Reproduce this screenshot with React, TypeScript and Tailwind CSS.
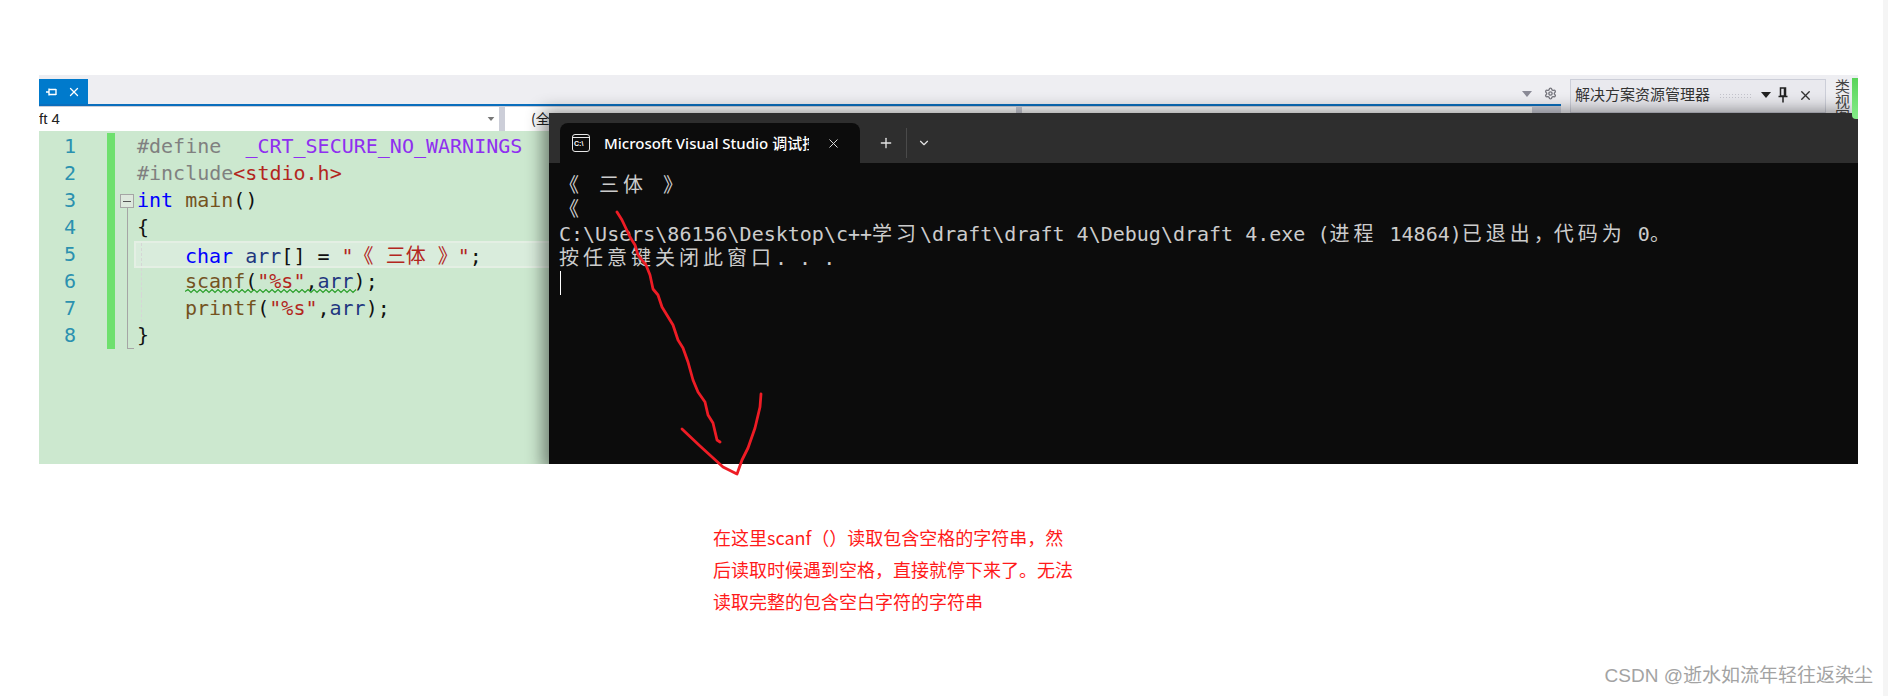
import React from "react";
import { X, Plus, ChevronDown, Settings } from "lucide-react";

const mono = "font-['DejaVu_Sans_Mono','Noto_Sans_CJK_SC',monospace]";
const C = {
  gray: "text-[#808080]",
  purple: "text-[#8f2ff0]",
  red: "text-[#b3261e]",
  blue: "text-[#0000ff]",
  brown: "text-[#74531f]",
  navy: "text-[#1f377f]",
  black: "text-[#111111]",
};

type Tok = [string, string];
type Line = { toks: Tok[]; indent?: boolean; fold?: "box" | "line" | "end" | "none"; hl?: boolean; squiggle?: boolean };

const lines: Line[] = [
  { fold: "none", toks: [["#define  ", C.gray], ["_CRT_SECURE_NO_WARNINGS", C.purple]] },
  { fold: "none", toks: [["#include", C.gray], ["<stdio.h>", C.red]] },
  { fold: "box", toks: [["int", C.blue], [" ", C.black], ["main", C.brown], ["()", C.black]] },
  { fold: "line", toks: [["{", C.black]] },
  {
    fold: "line",
    indent: true,
    hl: true,
    toks: [["char", C.blue], [" ", C.black], ["arr", C.navy], ["[] = ", C.black], ['"', C.red]],
  },
  {
    fold: "line",
    indent: true,
    squiggle: true,
    toks: [["scanf", C.brown], ["(", C.black], ['"%s"', C.red], [",", C.black], ["arr", C.navy], [");", C.black]],
  },
  {
    fold: "line",
    indent: true,
    toks: [["printf", C.brown], ["(", C.black], ['"%s"', C.red], [",", C.black], ["arr", C.navy], [");", C.black]],
  },
  { fold: "end", toks: [["}", C.black]] },
];

function Fold({ kind }: { kind: Line["fold"] }) {
  return (
    <div className="relative h-full w-[19px] shrink-0">
      {kind === "box" && (
        <>
          <div className="absolute left-[5px] top-[7px] flex h-[14px] w-[14px] items-center justify-center border border-[#a5a5a5] bg-[#dde8dd]">
            <div className="h-px w-[8px] bg-[#555555]" />
          </div>
          <div className="absolute left-[12px] top-[21px] h-[6px] w-px bg-[#a5a5a5]" />
        </>
      )}
      {kind === "line" && <div className="ml-[12px] h-full w-px bg-[#a5a5a5]" />}
      {kind === "end" && <div className="ml-[12px] h-[27px] w-[7px] border-b border-l border-[#a5a5a5]" />}
    </div>
  );
}

function CodeRow({ n, line }: { n: number; line: Line }) {
  return (
    <div className="flex h-[27px] items-stretch">
      <div className="w-[37px] shrink-0 text-right leading-[27px] text-[#2b91af]">{n}</div>
      <div className="w-[31px] shrink-0" />
      <div className="w-[8px] shrink-0 bg-[#6ee06e]" />
      <Fold kind={line.fold} />
      <div
        className={`flex min-w-0 flex-1 items-stretch pl-[3px] leading-[27px] whitespace-pre ${
          line.hl ? "border-y-2 border-l-2 border-[#e4efe4] bg-[#d9ecdc] pl-px leading-[23px]" : ""
        }`}
      >
        {line.indent && <div className="ml-[4px] w-[44px] shrink-0 border-l border-dashed border-[#d6d6d6]" />}
        <div className="relative">
          {line.toks.map(([t, c], i) => (
            <span key={i} className={c}>
              {t}
            </span>
          ))}
          {line.hl && (
            <>
              <span className={C.red}>《 三体 》</span>
              <span className={C.red}>"</span>
              <span className={C.black}>;</span>
            </>
          )}
          {line.squiggle && (
            <svg className="absolute left-0 top-[21px]" width="180" height="5" viewBox="0 0 180 5" fill="none">
              <path
                d="M0 2.5 l3 -2 l3 3 l3 -3 l3 3 l3 -3 l3 3 l3 -3 l3 3 l3 -3 l3 3 l3 -3 l3 3 l3 -3 l3 3 l3 -3 l3 3 l3 -3 l3 3 l3 -3 l3 3 l3 -3 l3 3 l3 -3 l3 3 l3 -3 l3 3 l3 -3 l3 3 l3 -3 l3 3 l3 -3 l3 3 l3 -3 l3 3 l3 -3 l3 3 l3 -3 l3 3 l3 -3 l3 3 l3 -3 l3 3 l3 -3 l3 3 l3 -3 l3 3 l3 -3 l3 3 l3 -3 l3 3 l3 -3 l3 3 l3 -3 l3 3 l3 -3 l3 3 l3 -3"
                stroke="#2ca02c"
                strokeWidth="1.2"
              />
            </svg>
          )}
        </div>
      </div>
    </div>
  );
}

function PinIcon({ className, color }: { className?: string; color: string }) {
  return (
    <svg className={className} width="12" height="12" viewBox="0 0 12 12" fill="none" stroke={color} strokeWidth="1.4">
      <path d="M1 6h3M4 2.5v7M4 3.5h7M4 8.5h7M11 3v6" />
    </svg>
  );
}

function PinDown({ className }: { className?: string }) {
  return (
    <svg className={className} width="10" height="16" viewBox="0 0 10 16" fill="none" stroke="#222222" strokeWidth="1.5">
      <path d="M2.5 1h5v8h-5zM6.5 1v8M0.5 9.5h9M5 10v5.5" />
    </svg>
  );
}

function Caret({ color, className }: { color: string; className?: string }) {
  return (
    <svg className={className} width="10" height="6" viewBox="0 0 10 6">
      <path d="M0 0h10L5 6z" fill={color} />
    </svg>
  );
}

function Cjk({ children }: { children: React.ReactNode }) {
  return <span className="tracking-[4px]">{children}</span>;
}

function Terminal() {
  return (
    <div className="absolute left-[510px] top-[38px] flex h-[360px] w-[1309px] flex-col bg-[#0c0c0c] shadow-[-6px_-2px_16px_rgba(0,0,0,0.45)]">
      <div className="flex h-[50px] shrink-0 items-end bg-[#2e2e2e] pl-[11px]">
        <div className="flex h-[40px] w-[300px] items-center rounded-t-[8px] bg-[#0c0c0c] pl-[12px] text-white">
          <div className="flex h-[18px] w-[18px] shrink-0 flex-col overflow-hidden rounded-[3px] border border-[#e8e8e8]">
            <div className="h-[3px] shrink-0 border-b border-[#e8e8e8]" />
            <div className="pl-px font-['Liberation_Sans',sans-serif] text-[7px] font-bold leading-[11px]">C:\</div>
          </div>
          <div className="ml-[14px] w-[205px] shrink-0 overflow-hidden whitespace-nowrap font-['Noto_Sans','Noto_Sans_CJK_SC',sans-serif] text-[15px] font-medium leading-[20px]">
            Microsoft Visual Studio 调试控制台
          </div>
          <X className="ml-[17px] text-[#e4e4e4]" size={15} strokeWidth={1.5} />
        </div>
        <div className="flex h-[40px] items-center">
          <Plus className="ml-[18px] text-[#e4e4e4]" size={16} strokeWidth={2} />
          <div className="ml-[12px] h-[30px] w-px bg-[#4a4a4a]" />
          <ChevronDown className="ml-[10px] text-[#e4e4e4]" size={14} strokeWidth={2} />
        </div>
      </div>
      <div className={`${mono} pl-[10px] pt-[10px] text-[20px] leading-[24.4px] whitespace-pre text-[#cccccc]`}>
        <div>
          <Cjk>《 三体 》</Cjk>
        </div>
        <div>
          <Cjk>《</Cjk>
        </div>
        <div>
          {"C:\\Users\\86156\\Desktop\\c++"}
          <Cjk>学习</Cjk>
          {"\\draft\\draft 4\\Debug\\draft 4.exe ("}
          <Cjk>进程</Cjk>
          {" 14864)"}
          <Cjk>已退出</Cjk>
          <span>，</span>
          <Cjk>代码为</Cjk>
          {" 0"}
          <Cjk>。</Cjk>
        </div>
        <div>
          <Cjk>按任意键关闭此窗口</Cjk>
          {". . ."}
        </div>
        <div className="ml-px h-[24px] w-px bg-white" />
      </div>
    </div>
  );
}

export default function App() {
  return (
    <div className="flex h-[696px] w-full overflow-hidden bg-white font-['Noto_Sans_CJK_SC',sans-serif]">
      <div className="flex min-w-0 flex-1 flex-col">
        <div className="relative ml-[39px] mt-[75px] flex h-[389px] w-[1819px] shrink-0 overflow-hidden bg-[#eeeef2]">
          <div className="flex w-[1522px] shrink-0 flex-col">
            <div className="flex h-[29px] shrink-0 items-end justify-between pr-[2px]">
              <div className="flex h-[25px] w-[49px] items-center gap-[10px] bg-[#007acc] pl-[6px]">
                <PinIcon color="#ffffff" />
                <X className="text-white" size={14} strokeWidth={2.2} />
              </div>
              <div className="mb-[4px] flex items-center gap-[12px] pr-[2px]">
                <Caret color="#8a8a96" />
                <Settings className="text-[#77777f]" size={13} strokeWidth={2.6} />
              </div>
            </div>
            <div className="h-[2px] shrink-0 bg-[#0a6ebd]" />
            <div className="flex h-[25px] shrink-0 gap-[6px] bg-[#ccced8] pt-px">
              <div className="flex w-[460px] items-center justify-between bg-white pr-[4px] text-[15px] text-[#222222]">
                <span className="font-['Liberation_Sans',sans-serif]">ft 4</span>
                <Caret color="#777777" className="h-[4px] w-[8px]" />
              </div>
              <div className="w-[511px] bg-white pl-[26px] font-['Noto_Sans_CJK_SC',sans-serif] text-[14px] leading-[22px] text-[#222222]">(全</div>
              <div className="w-[510px] bg-white" />
            </div>
            <div className={`${mono} flex-1 bg-[#cce8cf] pt-[2px] text-[20px]`}>
              {lines.map((l, i) => (
                <CodeRow key={i} n={i + 1} line={l} />
              ))}
            </div>
          </div>
          <div className="ml-[9px] flex h-[34px] w-[256px] shrink-0 translate-y-[4px] items-start whitespace-nowrap border border-[#ccced8] bg-[#e9e9ee] pl-[4px] pr-[6px] pt-[3px]">
            <span className="shrink-0 text-[15px] leading-[22px] text-[#333333]">解决方案资源管理器</span>
            <div className="ml-[9px] mt-[10px] h-[5px] w-[33px] shrink-0 bg-[radial-gradient(#c4c4cc_1px,transparent_1px)] bg-[length:3px_3px]" />
            <Caret color="#222222" className="ml-[9px] mt-[9px] shrink-0" />
            <PinDown className="ml-[7px] mt-[4px] shrink-0" />
            <X className="ml-[10px] mt-[5px] shrink-0 text-[#333333]" size={15} strokeWidth={2.2} />
          </div>
          <div className="ml-[8px] mt-[4px] h-[34px] overflow-hidden whitespace-nowrap text-[15px] leading-[16px] text-[#444444] [writing-mode:vertical-rl]">类视图</div>
          <div className="absolute right-0 top-[3px] z-10 h-[41px] w-[6px] rounded-bl-[4px] bg-gradient-to-b from-[#59d45a] to-[#84ec88]" />
          <Terminal />
        </div>
        <div className="ml-[713px] mt-[57px] w-[370px] text-[18px] leading-[32px] text-[#ff1a1a]">
          <div>在这里scanf（）读取包含空格的字符串，然</div>
          <div>后读取时候遇到空格，直接就停下来了。无法</div>
          <div>读取完整的包含空白字符的字符串</div>
        </div>
        <div className="mr-[10px] mt-[46px] self-end whitespace-nowrap font-['Liberation_Sans','Noto_Sans_CJK_SC',sans-serif] text-[19px] leading-[26px] text-[#a3a3a3]">
          CSDN @逝水如流年轻往返染尘
        </div>
      </div>
      <div className="w-[5px] shrink-0 bg-[#f5f5f5]" />
      <svg className="pointer-events-none absolute left-0 top-0" width="1888" height="696" viewBox="0 0 1888 696" fill="none">
        <path
          d="M617 212 L622 220 L630 237 L635 245 L638 255 L646 265 L650 275 L653 289 L658 295 L662 307 L673 325 L678 340 L683 348 L688 362 L693 380 L698 392 L705 402 L708 415 L713 423 L717 440 L720 442"
          stroke="#ee1c25"
          strokeWidth="2.8"
          strokeLinejoin="round"
          strokeLinecap="round"
        />
        <path
          d="M761 394 L760 407 L755 428 L748 448 L742 460 L737 474 L723 467 L700 446 L682 429"
          stroke="#ee1c25"
          strokeWidth="2.8"
          strokeLinejoin="round"
          strokeLinecap="round"
        />
      </svg>
    </div>
  );
}
